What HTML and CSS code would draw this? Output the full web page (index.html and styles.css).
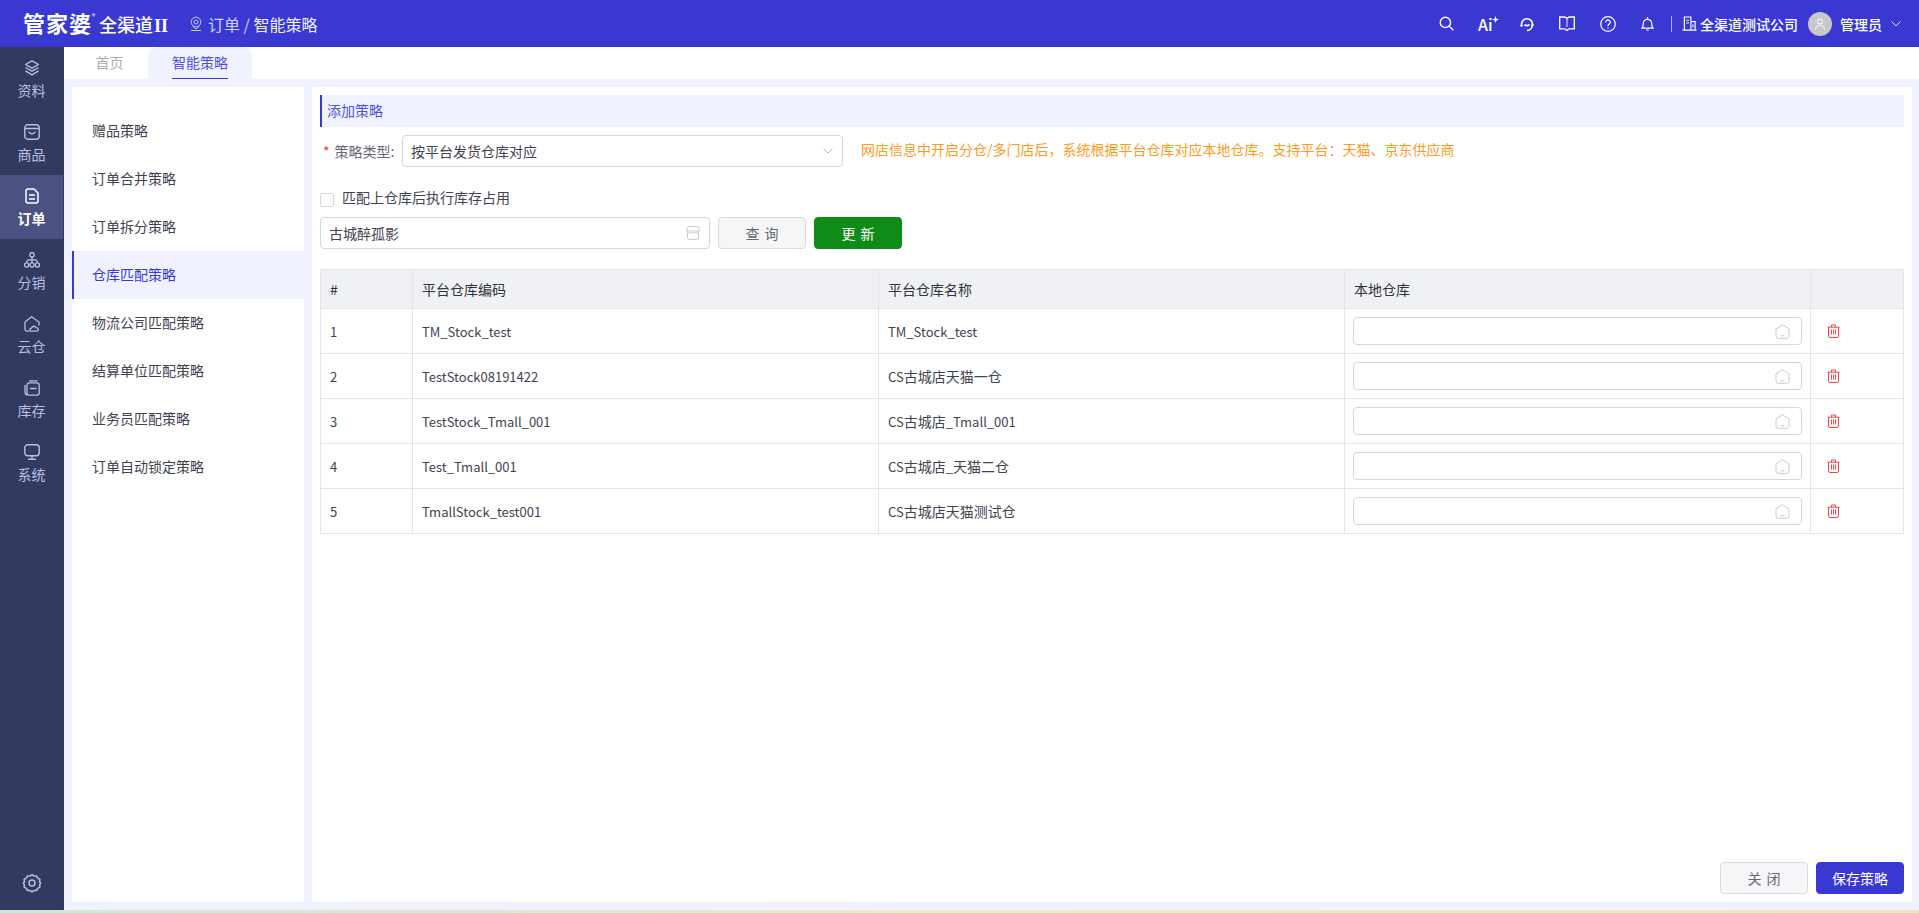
FILE: index.html
```html
<!DOCTYPE html>
<html lang="zh-CN">
<head>
<meta charset="utf-8">
<title>智能策略</title>
<link rel="stylesheet" href="styles.css">
</head>
<body>
<svg class="defs" aria-hidden="true">
  <symbol id="home" viewBox="0 0 15 15" fill="none" stroke="currentColor"><path d="M7.500 .700L14 4.800v7.200a2.300 2.300 0 0 1-2.300 2.300H3.300A2.300 2.300 0 0 1 1 12V4.800z"/><path d="M5.500 11.800h4"/></symbol>
  <symbol id="trash" viewBox="0 0 13 14" fill="none" stroke="currentColor"><path d="M.500 3.200h12M4.500 3V1h4v2M1.500 3.200V12a1.500 1.500 0 0 0 1.500 1.500h7a1.500 1.500 0 0 0 1.500-1.500V3.200M4.500 5.500v5M6.500 5.500v5M8.500 5.500v5"/></symbol>
</svg>
<div class="app">
  <header class="topbar">
    <div class="logo"><span class="logo-main">管家婆</span><span class="logo-r">®</span><span class="logo-sub">全渠道</span><span class="logo-ii">II</span></div>
    <svg class="crumb-pin" viewBox="0 0 14 16" fill="none" stroke="currentColor"><circle cx="7" cy="6" r="4.800"/><circle cx="7" cy="6" r="2"/><path d="M3.500 10l3.500 3 3.500-3M2 14.500h10"/></svg>
    <div class="crumb"><span class="crumb-dim">订单</span> <span class="crumb-sep">/</span> <span>智能策略</span></div>
    <div class="top-actions">
      <svg class="top-icon i-search" viewBox="0 0 16 16" fill="none" stroke="currentColor" stroke-width="1.500"><circle cx="6.800" cy="6.800" r="5.500"/><path d="M10.800 10.800L15.300 15.300"/></svg>
      <div class="top-ai">Ai<svg class="ai-star" viewBox="0 0 8 8" fill="currentColor"><path d="M4 0l1 3 3 1-3 1-1 3-1-3-3-1 3-1z"/></svg></div>
      <svg class="top-icon i-head" viewBox="0 0 16 16" fill="none" stroke="currentColor" stroke-width="1.600"><path d="M2.500 8.500a5.500 5.500 0 0 1 11-.5c0 3.500-2 6.500-5.500 6.500"/><path d="M5.500 8.500c1 1.500 4 1.500 5 0"/><circle cx="2.500" cy="9.500" r="1.200" fill="currentColor" stroke="none"/><circle cx="13.500" cy="9" r="1.200" fill="currentColor" stroke="none"/></svg>
      <svg class="top-icon i-book" viewBox="0 0 16 16" fill="none" stroke="currentColor" stroke-width="1.300"><path d="M.700 1h5.300L8 2.500 10 1h5.300v11.800H10L8 14.500l-2-1.700H.700z"/><path d="M8 3v8" stroke="#e9a8e0"/></svg>
      <svg class="top-icon i-help" viewBox="0 0 16 16" fill="none" stroke="currentColor" stroke-width="1.200"><circle cx="8" cy="8" r="7.300"/><path d="M5.700 6.200a2.300 2.300 0 1 1 3.600 1.900C8.400 8.700 8 9 8 10"/><circle cx="8" cy="12" r=".7" fill="currentColor" stroke="none"/></svg>
      <svg class="top-icon i-bell" viewBox="0 0 14 16" fill="none" stroke="currentColor" stroke-width="1.300"><path d="M1 13c1-1 1.500-2 1.500-5a4.500 4.500 0 0 1 9 0c0 3 .5 4 1.500 5z"/><path d="M5.500 15h3M7 1v2"/></svg>
      <span class="top-divider"></span>
      <svg class="top-icon i-org" viewBox="0 0 16 16" fill="none" stroke="currentColor" stroke-width="1.200"><path d="M2.500 15V1h7v14M9.500 6H14v9M.5 15h15M4.500 4.500h3M4.500 7.500h3M11.700 9v3"/></svg>
      <span class="company">全渠道测试公司</span>
      <span class="avatar"><svg viewBox="0 0 12 12" fill="none" stroke="#fff" stroke-width="1"><circle cx="6" cy="3.500" r="2.500"/><path d="M1.500 11.500c.4-3 2.300-4.200 4.500-4.200s4.100 1.200 4.500 4.200"/></svg></span>
      <span class="user">管理员</span>
      <svg class="user-caret" viewBox="0 0 10 6" fill="none" stroke="currentColor"><path d="M.5.500L5 5 9.500.500"/></svg>
    </div>
  </header>
  <div class="body-row">
    <nav class="rail">
      <a class="rail-item"><svg viewBox="0 0 16 16" fill="none" stroke="currentColor" stroke-width="1.400" stroke-linejoin="round"><path d="M8 .8l6.500 3.700L8 8.200 1.500 4.500z"/><path d="M1.500 7.500L8 11.200l6.500-3.700M1.500 10.800L8 14.800l6.500-4"/></svg><span>资料</span></a>
      <a class="rail-item"><svg viewBox="0 0 16 16" fill="none" stroke="currentColor" stroke-width="1.400"><rect x=".8" y=".8" width="14.400" height="14.400" rx="3"/><path d="M1 4.500h14M5 7.500c.5 3 5.500 3 6 0"/></svg><span>商品</span></a>
      <a class="rail-item is-active"><svg viewBox="0 0 16 16" fill="none" stroke="currentColor" stroke-width="1.500"><path d="M2 3a2 2 0 0 1 2-2h6l4 4v8a2 2 0 0 1-2 2H4a2 2 0 0 1-2-2z"/><path d="M5 7h6M5 11h6"/></svg><span>订单</span></a>
      <a class="rail-item"><svg viewBox="0 0 16 16" fill="none" stroke="currentColor" stroke-width="1.300"><circle cx="8" cy="2.800" r="2.200"/><circle cx="2.600" cy="13" r="2.100"/><circle cx="8" cy="13" r="2.100"/><circle cx="13.400" cy="13" r="2.100"/><path d="M8 5v5.900M2.600 10.900c0-2 1-3 2.500-3h5.800c1.500 0 2.500 1 2.500 3"/></svg><span>分销</span></a>
      <a class="rail-item"><svg viewBox="0 0 16 16" fill="none" stroke="currentColor" stroke-width="1.300"><path d="M5.500 15.200H3a2 2 0 0 1-2-2V6l6.500-5.200L15 6v3.500"/><path d="M7.500 15.200c-2.200 0-2.200-3 0-3 .5-2.500 4-2.500 4.500-.5 2.800 0 3.200 3.500.5 3.500z"/></svg><span>云仓</span></a>
      <a class="rail-item"><svg viewBox="0 0 16 16" fill="none" stroke="currentColor" stroke-width="1.300"><rect x="3" y="2.800" width="12.200" height="12.400" rx="2.500"/><path d="M1 5v7.500A2.700 2.700 0 0 0 3 15M5 .8h8.500M6 8.500h6.500"/></svg><span>库存</span></a>
      <a class="rail-item"><svg viewBox="0 0 16 16" fill="none" stroke="currentColor" stroke-width="1.400"><rect x=".8" y=".8" width="14.400" height="11" rx="3"/><path d="M8 12v3M4 15.200h8"/></svg><span>系统</span></a>
      <svg class="rail-gear" viewBox="0 0 20 20" fill="none" stroke="currentColor" stroke-width="1.500"><path d="M10 1.500l2 1.600 2.500-.2 1.200 2.300 2.200 1.200-.3 2.600 1 1-1 2.300.3 1.800-2.200 1.200-1.200 2.300-2.500-.2-2 1.500-2-1.500-2.500.2-1.200-2.300-2.200-1.200.3-1.800-1-2.300 1-1-.3-2.600 2.200-1.200 1.200-2.300 2.500.2z" stroke-linejoin="round"/><circle cx="10" cy="10" r="3"/></svg>
    </nav>
    <div class="workspace">
      <div class="tabs">
        <span class="tab">首页</span>
        <span class="tab is-active"><span class="tab-label">智能策略</span></span>
      </div>
      <div class="panels">
        <aside class="strategy-menu">
          <a class="menu-item">赠品策略</a>
          <a class="menu-item">订单合并策略</a>
          <a class="menu-item">订单拆分策略</a>
          <a class="menu-item is-active">仓库匹配策略</a>
          <a class="menu-item">物流公司匹配策略</a>
          <a class="menu-item">结算单位匹配策略</a>
          <a class="menu-item">业务员匹配策略</a>
          <a class="menu-item">订单自动锁定策略</a>
        </aside>
        <main class="editor">
          <div class="section-title">添加策略</div>
          <div class="type-row">
            <label class="type-label"><span class="req">*</span>策略类型:</label>
            <div class="field type-select"><span>按平台发货仓库对应</span><svg class="caret" viewBox="0 0 10 6" fill="none" stroke="currentColor"><path d="M.5.500L5 5 9.500.500"/></svg></div>
            <span class="hint">网店信息中开启分仓/多门店后，系统根据平台仓库对应本地仓库。支持平台：天猫、京东供应商</span>
          </div>
          <label class="check-row"><span class="checkbox"></span><span class="check-text">匹配上仓库后执行库存占用</span></label>
          <div class="search-row">
            <div class="field search-field"><span>古城醉孤影</span><svg class="shop-icon" viewBox="0 0 14 14" fill="none" stroke="currentColor"><path d="M3 .500h8a2 2 0 0 1 2 2V5H1V2.500a2 2 0 0 1 2-2zM1 5c0 2.500 3.500 2.500 4 1 .5 1.500 3.500 1.500 4 0 .5 1.500 4 1.500 4-1M1.500 7v4.500a2 2 0 0 0 2 2h7a2 2 0 0 0 2-2V7"/></svg></div>
            <button class="btn btn-plain btn-spaced">查 询</button>
            <button class="btn btn-green btn-spaced">更 新</button>
          </div>
          <table class="grid">
            <colgroup><col class="c-idx"><col class="c-wide"><col class="c-wide"><col class="c-wide"><col></colgroup>
            <thead><tr><th>#</th><th>平台仓库编码</th><th>平台仓库名称</th><th>本地仓库</th><th></th></tr></thead>
            <tbody>
              <tr><td class="code">1</td><td class="code">TM_Stock_test</td><td class="code">TM_Stock_test</td><td><div class="field cell-field"><svg class="home-icon"><use href="#home"/></svg></div></td><td><svg class="trash"><use href="#trash"/></svg></td></tr>
              <tr><td class="code">2</td><td class="code">TestStock08191422</td><td><span class="code">CS</span>古城店天猫一仓</td><td><div class="field cell-field"><svg class="home-icon"><use href="#home"/></svg></div></td><td><svg class="trash"><use href="#trash"/></svg></td></tr>
              <tr><td class="code">3</td><td class="code">TestStock_Tmall_001</td><td><span class="code">CS</span>古城店<span class="code">_Tmall_001</span></td><td><div class="field cell-field"><svg class="home-icon"><use href="#home"/></svg></div></td><td><svg class="trash"><use href="#trash"/></svg></td></tr>
              <tr><td class="code">4</td><td class="code">Test_Tmall_001</td><td><span class="code">CS</span>古城店<span class="code">_</span>天猫二仓</td><td><div class="field cell-field"><svg class="home-icon"><use href="#home"/></svg></div></td><td><svg class="trash"><use href="#trash"/></svg></td></tr>
              <tr><td class="code">5</td><td class="code">TmallStock_test001</td><td><span class="code">CS</span>古城店天猫测试仓</td><td><div class="field cell-field"><svg class="home-icon"><use href="#home"/></svg></div></td><td><svg class="trash"><use href="#trash"/></svg></td></tr>
            </tbody>
          </table>
          <div class="footer">
            <button class="btn btn-plain btn-spaced">关 闭</button>
            <button class="btn btn-primary">保存策略</button>
          </div>
        </main>
      </div>
    </div>
  </div>
  <div class="bottom-strip"></div>
</div>
</body>
</html>
```

FILE: styles.css
```css
* { box-sizing: border-box; }
html, body { margin: 0; height: 100%; overflow: hidden; }
body {
  font-family: "Noto Sans CJK SC", "Noto Sans", sans-serif;
  font-size: 14px;
  color: #41434f;
  background: #f0f2ff;
}
.defs { display: none; }
.app { display: flex; flex-direction: column; height: 913px; }

.topbar {
  flex: 0 0 47px;
  display: flex;
  align-items: center;
  background: #3939d1;
  color: #fff;
  padding-left: 24px;
}
.logo { display: flex; align-items: baseline; width: 149px; font-weight: 700; white-space: nowrap; }
.logo-main { font-size: 22px; letter-spacing: 1px; line-height: 24px; margin-left: -1px; }
.logo-r { font-size: 6px; align-self: flex-start; width: 6px; margin-top: 2px; }
.logo-sub { font-size: 18px; line-height: 24px; font-weight: 500; margin-left: 1px; }
.logo-ii { font-family: "Liberation Serif", serif; font-size: 18px; margin-left: 1px; }
.crumb-pin { width: 14px; height: 16px; margin: 0 5px 0 16px; color: #c3c6f3; }
.crumb { font-size: 16px; color: #eceefd; white-space: nowrap; }
.crumb-dim { color: #cfd1f6; }
.crumb-sep { color: #cfd1f6; }
.top-actions { margin-left: auto; display: flex; align-items: center; height: 100%; width: 480px; }
.top-icon { flex: none; color: #fff; }
.i-search { width: 15px; height: 15px; }
.top-ai { margin-left: 24px; width: 18px; font-size: 16px; font-weight: 500; display: flex; line-height: 16px; }
.ai-star { width: 7px; height: 7px; flex: none; margin-left: -1px; }
.i-head { width: 16px; height: 16px; margin-left: 23px; }
.i-book { width: 16px; height: 16px; margin-left: 24px; }
.i-help { width: 16px; height: 16px; margin-left: 25px; }
.i-bell { width: 13px; height: 15px; margin-left: 25px; }
.top-divider { width: 1px; height: 16px; background: #b5b6ec; margin: 0 10px 0 17px; }
.i-org { width: 15px; height: 15px; }
.company { margin-left: 3px; font-weight: 500; white-space: nowrap; }
.avatar { width: 24px; height: 24px; border-radius: 50%; background: #c7c7cc; margin-left: 10px; display: flex; align-items: center; justify-content: center; flex: none; }
.avatar svg { width: 12px; height: 12px; }
.user { margin-left: 8px; font-weight: 500; white-space: nowrap; }
.user-caret { width: 10px; height: 6px; margin-left: 9px; color: #dcdcf8; }

.body-row { flex: 1; display: flex; min-height: 0; }
.rail { flex: 0 0 64px; background: #343a5f; display: flex; flex-direction: column; color: #b9bfe4; }
.rail-item { height: 64px; padding-top: 13px; display: flex; flex-direction: column; align-items: center; gap: 4px; margin-right: 1px; }
.rail-item svg { width: 16px; height: 16px; flex: none; }
.rail-item span { line-height: 20px; font-size: 14px; }
.rail-item.is-active { background: #4b5282; color: #fff; font-weight: 700; }
.rail-gear { width: 20px; height: 20px; margin: auto 0 17px 22px; }

.workspace { flex: 1; display: flex; flex-direction: column; min-width: 0; }
.tabs { flex: 0 0 32px; background: #fff; display: flex; padding-left: 20px; }
.tab { width: 64px; padding-right: 13px; text-align: center; line-height: 30px; color: #ababab; }
.tab.is-active { width: 104px; padding-right: 0; background: #f0f2ff; border-radius: 10px 10px 0 0; color: #5151d8; display: flex; justify-content: center; }
.tab-label { display: block; height: 32px; line-height: 30px; border-bottom: 1px solid #3939d1; }

.panels { flex: 1; display: flex; gap: 8px; padding: 8px 7px 8px 8px; min-height: 0; }
.strategy-menu { flex: 0 0 232px; background: #fff; padding-top: 20px; }
.menu-item { display: block; height: 48px; line-height: 46px; padding-left: 20px; color: #41434f; }
.menu-item.is-active { background: #f0f2ff; color: #3939d1; border-left: 2px solid #3939d1; padding-left: 18px; }

.editor { flex: 1; background: #fff; padding: 8px; display: flex; flex-direction: column; min-width: 0; }
.section-title { height: 32px; line-height: 30px; background: #f0f2ff; border-left: 2px solid #3939d1; padding-left: 5px; color: #5353d9; }
.type-row { display: flex; align-items: center; height: 32px; margin-top: 8px; }
.type-label { width: 82px; padding: 0 0 1px 3px; color: #666874; white-space: nowrap; }
.req { color: #f5372b; margin-right: 5px; }
.field { display: flex; align-items: center; justify-content: space-between; background: #fff; border: 1px solid #d5d7df; border-radius: 4px; padding: 0 8px; color: #41434f; }
.field span { margin-top: -1px; }
.type-select { width: 441px; height: 32px; }
.caret { width: 10px; height: 6px; color: #b5b7c0; margin-right: 1px; }
.hint { margin: -5px 0 0 18px; color: #ff9a1f; white-space: nowrap; }
.check-row { display: flex; align-items: center; height: 14px; margin-top: 25px; color: #41434f; }
.check-text { margin-top: -4px; }
.checkbox { width: 14px; height: 14px; border: 1px solid #d5d7df; border-radius: 2px; margin: 2px 8px 0 0; background: #fff; flex: none; }
.search-row { display: flex; gap: 8px; margin-top: 11px; }
.search-field { width: 390px; height: 32px; }
.shop-icon { width: 14px; height: 14px; color: #c9cad0; margin-right: 1px; }
.btn { width: 88px; height: 32px; border-radius: 4px; font: inherit; padding: 0; cursor: pointer; }
.btn-spaced { word-spacing: 2px; }
.btn-plain { background: #f6f6f9; border: 1px solid #d9dbe1; color: #666874; }
.btn-green { background: #0f8c17; border: 1px solid #0f8c17; color: #fff; }
.btn-primary { background: #3939d1; border: 1px solid #3939d1; color: #fff; }

.grid { margin-top: 20px; width: 1584px; border-collapse: collapse; table-layout: fixed; }
.c-idx { width: 92px; }
.c-wide { width: 466px; }
.grid th, .grid td { border: 1px solid #e3e5ea; padding: 0 8px 0 9px; text-align: left; font-weight: 400; color: #41434f; }
.grid th { height: 39px; background: #f0f1f4; color: #30323c; }
.grid td { height: 45px; }
.grid .code { font-size: 13px; }
.cell-field { height: 28px; justify-content: flex-end; margin-left: -1px; }
.home-icon { width: 15px; height: 15px; color: #c9cad0; margin-right: 3px; }
.trash { display: block; width: 13px; height: 14px; color: #f1424a; margin-left: 7px; }

.footer { margin-top: auto; display: flex; justify-content: flex-end; gap: 8px; }

.bottom-strip { flex: 0 0 3px; background: linear-gradient(90deg, #d6e2d8, #f2e9c9 50%, #f3e3c4); }
```
